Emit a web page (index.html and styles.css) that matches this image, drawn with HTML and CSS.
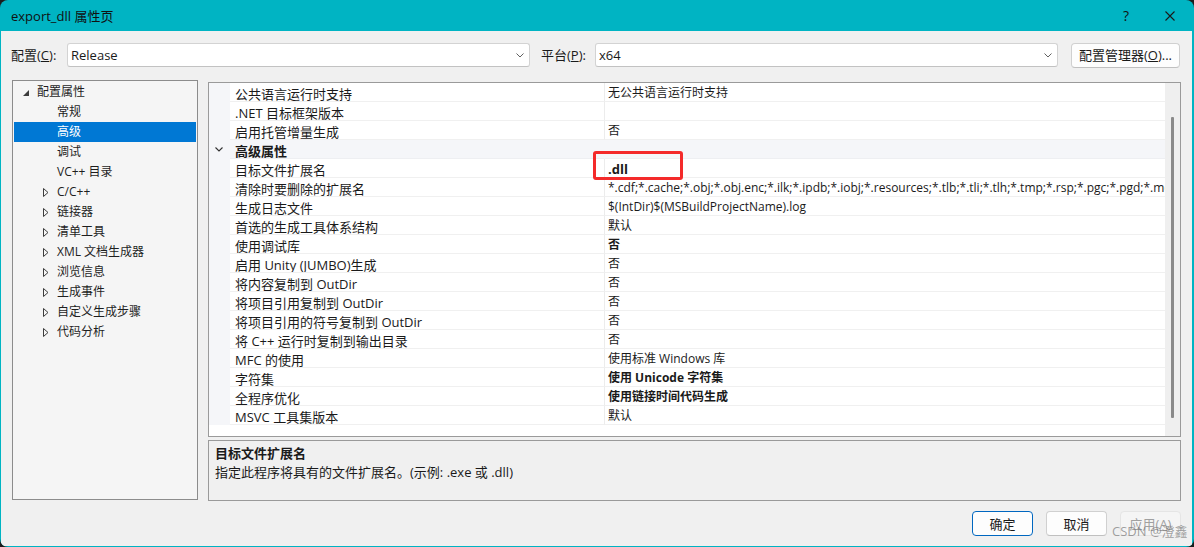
FILE: index.html
```html
<!DOCTYPE html>
<html lang="zh-CN">
<head>
<meta charset="utf-8">
<title>export_dll 属性页</title>
<link rel="stylesheet" href="styles.css">
</head>
<body>
<div class="frame">
  <div class="titlebar">
    <span class="title">export_dll 属性页</span>
    <span class="help">?</span>
    <svg class="close" width="10" height="10" viewBox="0 0 10 10"><path d="M0.5 0.5 L9.5 9.5 M9.5 0.5 L0.5 9.5" stroke="#1a1a1a" stroke-width="1.1" fill="none"/></svg>
  </div>
  <div class="window">
    <div class="config-row">
      <span class="lbl lbl-config">配置(<u>C</u>):</span>
      <div class="combo">
        <span class="combo-text">Release</span>
        <svg class="chev" width="8" height="5" viewBox="0 0 8 5"><polyline points="0.5,0.5 4,4 7.5,0.5" fill="none" stroke="#606060" stroke-width="1"/></svg>
      </div>
      <span class="lbl lbl-platform">平台(<u>P</u>):</span>
      <div class="combo">
        <span class="combo-text">x64</span>
        <svg class="chev" width="8" height="5" viewBox="0 0 8 5"><polyline points="0.5,0.5 4,4 7.5,0.5" fill="none" stroke="#606060" stroke-width="1"/></svg>
      </div>
      <button class="btn btn-manager">配置管理器(<u>O</u>)...</button>
    </div>

    <div class="main">
      <div class="tree">
        <div class="trow lvl0"><span class="arrow"><svg width="6" height="6" viewBox="0 0 6 6"><polygon points="6,0 6,6 0,6" fill="#3c3c3c"/></svg></span>配置属性</div>
        <div class="trow leaf">常规</div>
        <div class="trow leaf selected">高级</div>
        <div class="trow leaf">调试</div>
        <div class="trow leaf">VC++ 目录</div>
        <div class="trow lvl1"><span class="arrow"><svg width="6" height="9" viewBox="0 0 6 9"><polygon points="0.5,0.5 5,4.5 0.5,8.5" fill="none" stroke="#3c3c3c" stroke-width="1"/></svg></span>C/C++</div>
        <div class="trow lvl1"><span class="arrow"><svg width="6" height="9" viewBox="0 0 6 9"><polygon points="0.5,0.5 5,4.5 0.5,8.5" fill="none" stroke="#3c3c3c" stroke-width="1"/></svg></span>链接器</div>
        <div class="trow lvl1"><span class="arrow"><svg width="6" height="9" viewBox="0 0 6 9"><polygon points="0.5,0.5 5,4.5 0.5,8.5" fill="none" stroke="#3c3c3c" stroke-width="1"/></svg></span>清单工具</div>
        <div class="trow lvl1"><span class="arrow"><svg width="6" height="9" viewBox="0 0 6 9"><polygon points="0.5,0.5 5,4.5 0.5,8.5" fill="none" stroke="#3c3c3c" stroke-width="1"/></svg></span>XML 文档生成器</div>
        <div class="trow lvl1"><span class="arrow"><svg width="6" height="9" viewBox="0 0 6 9"><polygon points="0.5,0.5 5,4.5 0.5,8.5" fill="none" stroke="#3c3c3c" stroke-width="1"/></svg></span>浏览信息</div>
        <div class="trow lvl1"><span class="arrow"><svg width="6" height="9" viewBox="0 0 6 9"><polygon points="0.5,0.5 5,4.5 0.5,8.5" fill="none" stroke="#3c3c3c" stroke-width="1"/></svg></span>生成事件</div>
        <div class="trow lvl1"><span class="arrow"><svg width="6" height="9" viewBox="0 0 6 9"><polygon points="0.5,0.5 5,4.5 0.5,8.5" fill="none" stroke="#3c3c3c" stroke-width="1"/></svg></span>自定义生成步骤</div>
        <div class="trow lvl1"><span class="arrow"><svg width="6" height="9" viewBox="0 0 6 9"><polygon points="0.5,0.5 5,4.5 0.5,8.5" fill="none" stroke="#3c3c3c" stroke-width="1"/></svg></span>代码分析</div>
      </div>

      <div class="right">
        <div class="grid">
          <div class="rows">
            <div class="prow"><span class="gut"></span><span class="pname">公共语言运行时支持</span><span class="pval">无公共语言运行时支持</span></div>
            <div class="prow"><span class="gut"></span><span class="pname">.NET 目标框架版本</span><span class="pval"></span></div>
            <div class="prow"><span class="gut"></span><span class="pname">启用托管增量生成</span><span class="pval">否</span></div>
            <div class="prow cat"><span class="gut"><svg width="8" height="5" viewBox="0 0 8 5"><polyline points="0.5,0.5 4,4 7.5,0.5" fill="none" stroke="#333" stroke-width="1.1"/></svg></span><span class="pname">高级属性</span><span class="pval"></span></div>
            <div class="prow"><span class="gut"></span><span class="pname">目标文件扩展名</span><span class="pval bold big">.dll</span></div>
            <div class="prow"><span class="gut"></span><span class="pname">清除时要删除的扩展名</span><span class="pval">*.cdf;*.cache;*.obj;*.obj.enc;*.ilk;*.ipdb;*.iobj;*.resources;*.tlb;*.tli;*.tlh;*.tmp;*.rsp;*.pgc;*.pgd;*.meta;*.tlog;*.manifest;*.res;*.pch;*.exp;*.idb;*.rep;*.xdc;*.pdb;*_manifest.rc;*.bsc;*.sbr;*.xml;*.metagen;*.bi</span></div>
            <div class="prow"><span class="gut"></span><span class="pname">生成日志文件</span><span class="pval">$(IntDir)$(MSBuildProjectName).log</span></div>
            <div class="prow"><span class="gut"></span><span class="pname">首选的生成工具体系结构</span><span class="pval">默认</span></div>
            <div class="prow"><span class="gut"></span><span class="pname">使用调试库</span><span class="pval bold">否</span></div>
            <div class="prow"><span class="gut"></span><span class="pname">启用 Unity (JUMBO)生成</span><span class="pval">否</span></div>
            <div class="prow"><span class="gut"></span><span class="pname">将内容复制到 OutDir</span><span class="pval">否</span></div>
            <div class="prow"><span class="gut"></span><span class="pname">将项目引用复制到 OutDir</span><span class="pval">否</span></div>
            <div class="prow"><span class="gut"></span><span class="pname">将项目引用的符号复制到 OutDir</span><span class="pval">否</span></div>
            <div class="prow"><span class="gut"></span><span class="pname">将 C++ 运行时复制到输出目录</span><span class="pval">否</span></div>
            <div class="prow"><span class="gut"></span><span class="pname">MFC 的使用</span><span class="pval">使用标准 Windows 库</span></div>
            <div class="prow"><span class="gut"></span><span class="pname">字符集</span><span class="pval bold">使用 Unicode 字符集</span></div>
            <div class="prow"><span class="gut"></span><span class="pname">全程序优化</span><span class="pval bold">使用链接时间代码生成</span></div>
            <div class="prow"><span class="gut"></span><span class="pname">MSVC 工具集版本</span><span class="pval">默认</span></div>
            <div class="filler"></div>
          </div>
          <div class="vscroll"><div class="thumb"></div></div>
        </div>
        <div class="desc">
          <div class="desc-title">目标文件扩展名</div>
          <div class="desc-text">指定此程序将具有的文件扩展名。(示例: .exe 或 .dll)</div>
        </div>
      </div>
    </div>

    <div class="footer">
      <button class="btn btn-default">确定</button>
      <button class="btn">取消</button>
      <button class="btn btn-disabled">应用(<u>A</u>)</button>
    </div>
  </div>
  <div class="highlight"></div>
  <div class="watermark">CSDN @澄鑫</div>
</div>
</body>
</html>
```

FILE: styles.css
```css
* { box-sizing: border-box; }

html, body {
  margin: 0;
  padding: 0;
  width: 1194px;
  height: 547px;
  overflow: hidden;
  background: #1c1c1c;
}

body {
  font-family: "Open Sans", "Noto Sans CJK SC", sans-serif;
  color: #1a1a1a;
}

.frame {
  position: relative;
  width: 1194px;
  height: 547px;
  background: #00b4c3;
  border-radius: 8px;
  padding: 0 2px 1px 1px;
  display: flex;
  flex-direction: column;
  overflow: hidden;
}

.titlebar {
  height: 31px;
  flex: none;
  display: flex;
  align-items: center;
  padding-left: 10px;
}

.title {
  font-size: 13px;
  line-height: 18px;
  color: #111;
}

.help {
  margin-left: auto;
  margin-right: 36px;
  font-size: 14px;
  line-height: 18px;
  color: #111;
}

.close {
  margin-right: 17px;
}

.window {
  flex: 1;
  background: #f0f0f0;
  display: flex;
  flex-direction: column;
}

/* config row */
.config-row {
  margin-top: 11px;
  height: 26px;
  display: flex;
  align-items: center;
  padding-left: 10px;
  font-size: 13px;
}

.lbl {
  line-height: 18px;
  white-space: nowrap;
}

.lbl-config { width: 56px; }

.lbl-platform {
  width: 54px;
  margin-left: 11px;
}

.combo {
  width: 463px;
  height: 24px;
  background: #fff;
  border: 1px solid #d3d3d3;
  border-bottom-color: #c2c2c2;
  border-radius: 3px;
  display: flex;
  align-items: center;
  padding-left: 3px;
  padding-right: 5px;
}

.combo-text {
  flex: 1;
  line-height: 18px;
}

.btn {
  font-family: "Open Sans", "Noto Sans CJK SC", sans-serif;
  font-size: 13px;
  color: #1a1a1a;
  height: 25px;
  width: 61px;
  background: #fdfdfd;
  border: 1px solid #d0d0d0;
  border-bottom-color: #c0c0c0;
  border-radius: 4px;
  padding: 0;
  line-height: 18px;
}

.btn-manager {
  width: 109px;
  margin-left: 13px;
}

/* main */
.main {
  margin-top: 12px;
  display: flex;
  padding-left: 11px;
  height: 421px;
}

.tree {
  width: 186px;
  height: 420px;
  background: #f5f5f5;
  border: 1px solid #8c8c8c;
  padding: 1px;
  font-size: 12px;
  color: #1e1e1e;
}

.trow {
  height: 20px;
  line-height: 20px;
  display: flex;
  align-items: center;
  white-space: nowrap;
}

.trow.lvl0 { padding-left: 9px; }
.trow.lvl1 { padding-left: 29px; }
.trow.leaf { padding-left: 43px; }

.trow .arrow {
  width: 14px;
  height: 20px;
  display: flex;
  align-items: center;
}

.trow.lvl0 .arrow svg { margin-top: 2px; }

.trow.selected {
  background: #0078d4;
  color: #fff;
}

.right {
  margin-left: 10px;
  width: 973px;
  display: flex;
  flex-direction: column;
}

.grid {
  margin-top: 2px;
  height: 355px;
  border: 1px solid #9a9a9a;
  display: flex;
  background: #fff;
}

.rows {
  flex: 1;
  display: flex;
  flex-direction: column;
  overflow: hidden;
}

.prow {
  height: 19px;
  flex: none;
  display: grid;
  grid-template-columns: 21px 374px 1fr;
}

.gut {
  background: #f5f6f9;
  display: flex;
  align-items: center;
  padding-left: 6px;
}

.pname {
  font-size: 13px;
  line-height: 18px;
  padding-top: 2px;
  padding-left: 5px;
  border-bottom: 1px solid #f0f0f0;
  white-space: nowrap;
  overflow: hidden;
}

.pval {
  font-size: 12px;
  line-height: 18px;
  padding-top: 1px;
  padding-left: 3px;
  border-left: 1px solid #ececec;
  border-bottom: 1px solid #f0f0f0;
  white-space: nowrap;
  overflow: hidden;
}

.pval.bold { font-weight: 700; }
.pval.big { font-size: 13px; }

.prow.cat .pname,
.prow.cat .pval {
  background: #f5f6f9;
  border-color: #f5f6f9;
  border-bottom-color: #eeeff2;
}

.prow.cat .pname { font-weight: 700; }

.filler {
  flex: 1;
  background: #fff;
}

.vscroll {
  width: 15px;
  background: #efefef;
  position: relative;
  padding-left: 6px;
  padding-top: 34px;
}

.thumb {
  width: 3px;
  height: 301px;
  background: #8a8a8a;
  border-radius: 1px;
}

.desc {
  margin-top: 3px;
  height: 61px;
  border: 1px solid #9a9a9a;
  background: #f0f0f0;
  padding: 3px 6px 0;
  font-size: 13px;
  line-height: 19px;
}

.desc-title { font-weight: 700; }

/* footer */
.footer {
  margin-top: 10px;
  display: flex;
  justify-content: flex-end;
  gap: 13px;
  padding-right: 11px;
}

.btn-default {
  border: 1px solid #0067c0;
}

.btn-disabled {
  background: #f5f5f5;
  border-color: #e5e5e5;
  color: #a0a0a0;
}

/* overlays */
.highlight {
  position: absolute;
  left: 593px;
  top: 151px;
  width: 90px;
  height: 29px;
  border: 3px solid #f42a2a;
  border-radius: 3px;
}

.watermark {
  position: absolute;
  left: 1112px;
  top: 522px;
  font-size: 13px;
  line-height: 18px;
  color: rgba(120, 120, 120, 0.7);
  white-space: nowrap;
}
```
